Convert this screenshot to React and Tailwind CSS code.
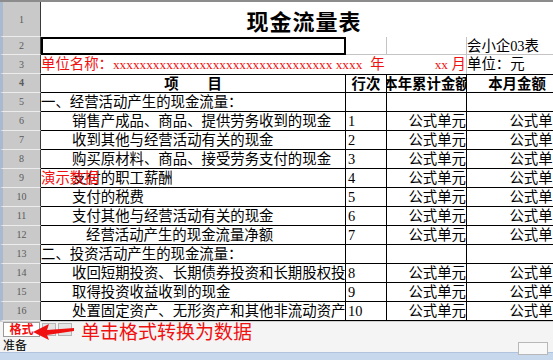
const FONT = { fontFamily: '"Liberation Serif", "Noto Sans CJK SC", serif' };

const ROWS = [
  { n: 5, text: '一、经营活动产生的现金流量：', indent: 0 },
  { n: 6, text: '销售产成品、商品、提供劳务收到的现金', indent: 2, no: '1' },
  { n: 7, text: '收到其他与经营活动有关的现金', indent: 2, no: '2' },
  { n: 8, text: '购买原材料、商品、接受劳务支付的现金', indent: 2, no: '3' },
  { n: 9, text: '支付的职工薪酬', indent: 2, no: '4', demo: true },
  { n: 10, text: '支付的税费', indent: 2, no: '5' },
  { n: 11, text: '支付其他与经营活动有关的现金', indent: 2, no: '6' },
  { n: 12, text: '经营活动产生的现金流量净额', indent: 3, no: '7' },
  { n: 13, text: '二、投资活动产生的现金流量：', indent: 0 },
  { n: 14, text: '收回短期投资、长期债券投资和长期股权投资收回的现金', indent: 2, no: '8' },
  { n: 15, text: '取得投资收益收到的现金', indent: 2, no: '9' },
  { n: 16, text: '处置固定资产、无形资产和其他非流动资产收回的现金净额', indent: 2, no: '10' },
];

const RowHead = ({ n, h = 'h-[19px]' }) => (
  <div className={`${h} w-[41px] shrink-0 flex items-center justify-center bg-[#c9c9c9] border-l-[3px] border-l-[#a9b9d0] border-r border-r-[#3a3a3a] border-b border-b-[#ececec] text-[10px] text-[#5a5a5a]`}>
    {n}
  </div>
);

const indents = { 0: 'pl-0', 2: 'pl-[31px]', 3: 'pl-[45px]' };

export default function App() {
  return (
    <div className="relative w-[553px] h-[360px] overflow-hidden bg-white text-black" style={FONT}>
      <div className="h-[2px] bg-[#8c8c8c]" />

      {/* row 1 */}
      <div className="flex">
        <RowHead n={1} h="h-[35px]" />
        <div className="h-[35px] w-[526px] shrink-0 flex items-center justify-center pt-[6px] text-[22px] font-bold tracking-[1px]">
          现金流量表
        </div>
      </div>

      {/* row 2 */}
      <div className="flex text-[14.4px] leading-[18px]">
        <RowHead n={2} h="h-[18px]" />
        <div className="h-[18px] w-[305px] shrink-0 border-2 border-black" />
        <div className="h-[18px] w-[41px] shrink-0 border-r border-b border-[#c4c4c4]" />
        <div className="h-[18px] w-[80px] shrink-0 border-r border-b border-[#c4c4c4]" />
        <div className="h-[18px] w-[100px] shrink-0 border-b border-[#c4c4c4] whitespace-nowrap">会小企03表</div>
      </div>

      {/* row 3 */}
      <div className="flex text-[14.4px] leading-[19px]">
        <RowHead n={3} />
        <div className="relative z-10 h-[19px] w-[346px] shrink-0 whitespace-nowrap text-[#f01010]">
          单位名称：<span className="text-[13.3px]">xxxxxxxxxxxxxxxxxxxxxxxxxxxxxxxxx xxxx</span>
          <span className="ml-[8px]">年</span>
        </div>
        <div className="h-[19px] w-[80px] shrink-0 text-right text-[#f01010] whitespace-nowrap border-r border-[#c4c4c4]">
          <span className="text-[13.3px]">xx</span> 月
        </div>
        <div className="h-[19px] w-[100px] shrink-0 whitespace-nowrap">单位：元</div>
      </div>

      {/* row 4 header */}
      <div className="flex text-[14.4px] leading-[18px] font-bold">
        <RowHead n={4} />
        <div className="h-[19px] w-[305px] shrink-0 flex justify-center border-t border-r border-b border-black">项　　目</div>
        <div className="h-[19px] w-[41px] shrink-0 flex justify-center border-t border-r border-b border-black whitespace-nowrap">行次</div>
        <div className="h-[19px] w-[80px] shrink-0 flex justify-center overflow-hidden border-t border-r border-b border-black whitespace-nowrap">
          <span className="shrink-0">本年累计金额</span>
        </div>
        <div className="h-[19px] w-[100px] shrink-0 flex justify-center border-t border-b border-black whitespace-nowrap">本月金额</div>
      </div>

      {ROWS.map((r) => (
        <div key={r.n} className="flex text-[14.4px] leading-[18px]">
          <RowHead n={r.n} />
          <div className={`relative h-[19px] w-[305px] shrink-0 overflow-hidden whitespace-nowrap border-r border-b border-black ${indents[r.indent]}`}>
            {r.text}
            {r.demo && <span className="absolute left-0 top-0 text-[#f01010]">演示数据</span>}
          </div>
          <div className="h-[19px] w-[41px] shrink-0 pl-[2px] border-r border-b border-black">{r.no}</div>
          <div className="h-[19px] w-[80px] shrink-0 text-right border-r border-b border-black">{r.no ? '公式单元' : ''}</div>
          <div className="h-[19px] w-[100px] shrink-0 text-right border-b border-black whitespace-nowrap">{r.no ? '公式单元' : ''}</div>
        </div>
      ))}

      {/* sheet tabs */}
      <div className="relative h-[16px] flex items-center bg-[#f4f4f4] border-t border-[#d0d0d0]">
        <div className="ml-[3px] h-[15px] w-[37px] flex items-center justify-center bg-white border border-[#9a9a9a] text-[12px] font-bold text-[#f01010]">
          格式
        </div>
        <div className="ml-[2px] h-[13px] w-[14px] border border-[#b5b5b5] bg-[#e4e4e4]" />
        <div className="ml-[2px] h-[13px] w-[14px] border border-[#b5b5b5] bg-[#e4e4e4]" />
      </div>

      {/* status bar */}
      <div className="relative h-[15px] flex items-center bg-[#f4f4f4] pl-[3px] text-[12px] leading-none" style={{ fontFamily: '"Noto Sans CJK SC", sans-serif' }}>
        准备
        <div className="absolute right-[5px] top-[5px] h-[13px] w-[30px] border border-[#b8b8b8] bg-[#f8f8f8]" />
      </div>
      <div className="h-[10px] bg-[#c8d8ec] border-t border-[#b0c4de]" />

      {/* annotation */}
      <div className="absolute left-[32px] top-[320px] flex items-center gap-[5px]">
        <svg width="44" height="20" viewBox="0 0 44 20">
          <polygon points="1,11 17,3 15,9 42,7 42,10 15,14 17,19" fill="#f01010" />
        </svg>
        <span className="text-[19px] leading-[22px] text-[#f01010]" style={{ fontFamily: '"Noto Sans CJK SC", sans-serif' }}>
          单击格式转换为数据
        </span>
      </div>
    </div>
  );
}
